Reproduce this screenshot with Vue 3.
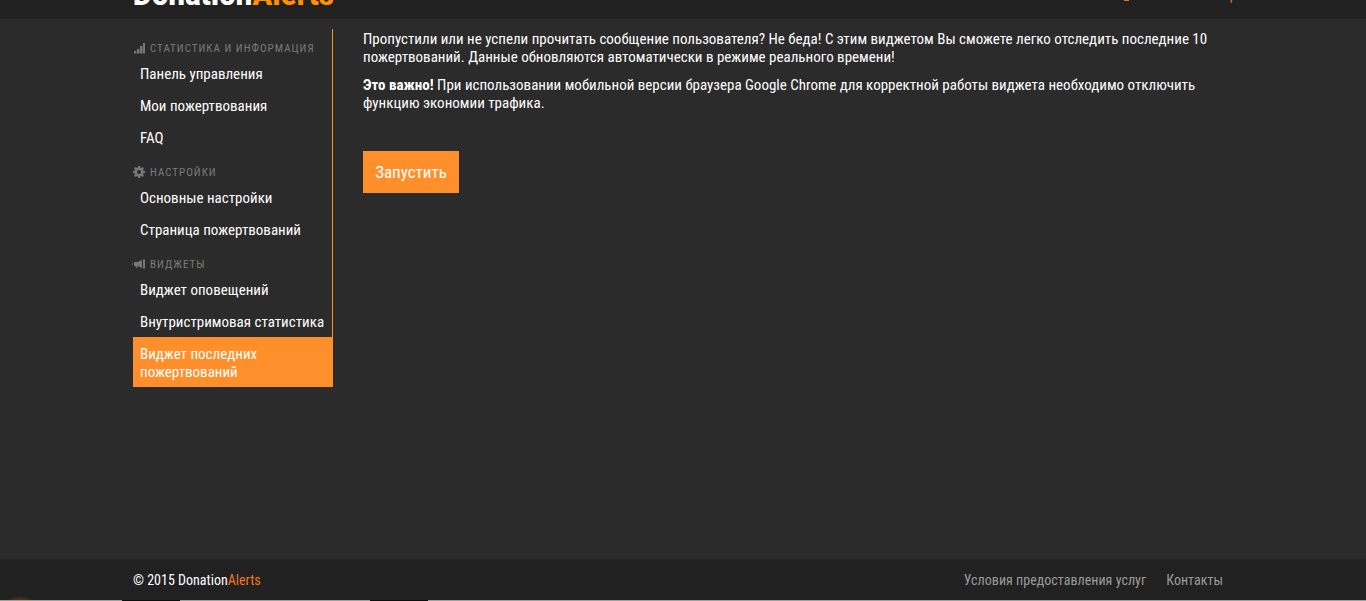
<script setup>
const groups = [
  { title: 'Статистика и информация', icon: 'bars', items: ['Панель управления', 'Мои пожертвования', 'FAQ'] },
  { title: 'Настройки', icon: 'cog', items: ['Основные настройки', 'Страница пожертвований'] },
  { title: 'Виджеты', icon: 'horn', items: ['Виджет оповещений', 'Внутристримовая статистика', 'Виджет последних пожертвований'] }
]
const activeItem = 'Виджет последних пожертвований'
const edgeParts = [
  { w: 122, dark: false },
  { w: 58, dark: true },
  { w: 190, dark: false },
  { w: 58, dark: true },
  { w: 938, dark: false }
]
</script>

<template>
  <div class="page">
    <header class="top">
      <div class="wrap top-row">
        <div class="logo">Donation<span>Alerts</span></div>
        <div class="user"><i class="user-ico"></i><span class="logout">Выход</span></div>
      </div>
    </header>
    <main class="wrap body">
      <nav class="side">
        <section v-for="g in groups" :key="g.title" class="group">
          <h4 class="head">
            <svg v-if="g.icon === 'bars'" class="ico" viewBox="0 0 12 12"><path d="M1 9h2.500v2.500H1zM4 7h2.500v4.500H4zM7 4h2.500v7.500H7zM10 1h2v10.500h-2z"/></svg>
            <svg v-else-if="g.icon === 'cog'" class="ico" viewBox="0 0 12 12"><path fill-rule="evenodd" d="M5 0h2l.3 1.600 1 .4L9.700 1 11 2.300l-1 1.400.4 1L12 5v2l-1.600.3-.4 1 1 1.400L9.700 11l-1.400-1-1 .4L7 12H5l-.3-1.600-1-.4-1.400 1L1 9.700l1-1.400-.4-1L0 7V5l1.600-.3.4-1-1-1.400L2.300 1l1.400 1 1-.4zM6 4a2 2 0 1 0 0 4 2 2 0 0 0 0-4z"/></svg>
            <svg v-else class="ico" viewBox="0 0 12 12"><path d="M-1 5.500h1v1h-1zM1 4h3.500L9 2v8L4.500 8H4l.4 2H3l-.4-2H1zM10 1.500h2v9h-2z"/></svg>
            <span>{{ g.title }}</span>
          </h4>
          <a v-for="it in g.items" :key="it" class="link" :class="{ active: it === activeItem }">{{ it }}</a>
        </section>
      </nav>
      <article class="content">
        <p>Пропустили или не успели прочитать сообщение пользователя? Не беда! С этим виджетом Вы сможете легко отследить последние 10 пожертвований. Данные обновляются автоматически в режиме реального времени!</p>
        <p><b>Это важно!</b> При использовании мобильной версии браузера Google Chrome для корректной работы виджета необходимо отключить функцию экономии трафика.</p>
        <button class="run">Запустить</button>
      </article>
    </main>
    <footer class="foot">
      <div class="wrap foot-row">
        <div class="copy">© 2015 Donation<span>Alerts</span></div>
        <div class="foot-links"><a>Условия предоставления услуг</a><a>Контакты</a></div>
      </div>
      <div class="glow"></div>
    </footer>
    <div class="edge">
      <i v-for="(p, n) in edgeParts" :key="n" :class="{ dark: p.dark }" :style="{ width: p.w + 'px' }"></i>
    </div>
  </div>
</template>

<style>
html, body { margin: 0; background: #2b2b2b; }
</style>

<style scoped>
.page {
  height: 601px;
  display: flex;
  flex-direction: column;
  background: #2b2b2b;
  color: #fff;
  font-family: Roboto, "Liberation Sans", sans-serif;
  font-stretch: 75%;
  overflow: hidden;
}
.wrap { width: 1100px; margin-left: 133px; }
.top {
  height: 18px;
  flex: none;
  background: #212121;
  border-bottom: 1px solid #262626;
  overflow: hidden;
}
.top-row { display: flex; justify-content: space-between; align-items: flex-start; height: 18px; overflow: hidden; }
.logo {
  font: 900 29px/29px Roboto, "Liberation Sans", sans-serif;
  letter-spacing: 0.25px;
  margin-top: -19px;
}
.logo span { color: #ff9000; }
.user { display: flex; align-items: flex-start; }
.user-ico { display: block; width: 5px; height: 1px; background: #f26f1f; margin-right: 69px; }
.logout { color: #f26f1f; font-size: 15px; line-height: 16px; margin-top: -13px; margin-right: -5px; }
.body { flex: 1; display: flex; gap: 30px; padding-top: 10px; min-height: 0; }
.side {
  width: 200px;
  box-sizing: border-box;
  padding-top: 1px;
  align-self: flex-start;
  border-right: 1px solid #ff8f2b;
  flex: none;
}
.group { display: flex; flex-direction: column; }
.head {
  margin: 0;
  height: 20px;
  padding-top: 8px;
  display: flex;
  align-items: center;
  gap: 5px;
  color: #7a7a7a;
  font-size: 11px;
  font-weight: 400;
  letter-spacing: 1.02px;
  text-transform: uppercase;
}
.ico { width: 12px; height: 12px; fill: #777; flex: none; overflow: visible; }
.link {
  display: block;
  box-sizing: border-box;
  padding: 7px 7px;
  min-height: 32px;
  font-size: 15px;
  line-height: 18px;
  color: #fff;
}
.link.active { background: #ff8f2b; width: 200px; margin-top: -1px; padding: 8px 7px 6px; }
.content { width: 860px; padding-top: 1px; font-size: 15px; line-height: 18px; }
.content p { margin: 0 0 10px; }
.run {
  display: block;
  margin-top: 39px;
  width: 96px;
  height: 42px;
  border: 0;
  background: #ff8f2b;
  color: #fff;
  font: inherit;
  font-size: 17px;
  font-stretch: 75%;
  padding: 0;
}
.foot { flex: none; height: 40px; background: #212121; border-top: 1px solid #262626; position: relative; overflow: hidden; }
.foot-row { display: flex; justify-content: space-between; align-items: center; height: 40px; font-size: 14px; }
.copy span { color: #f2771f; }
.foot-links { display: flex; gap: 20px; color: #9a9a9a; margin-right: 10px; letter-spacing: 0.03px; }
.glow {
  position: absolute;
  left: 5px;
  bottom: -8px;
  width: 30px;
  height: 12px;
  background: radial-gradient(closest-side, rgba(255, 110, 40, 0.35), rgba(255, 110, 40, 0));
}
.edge { height: 1px; flex: none; display: flex; }
.edge i { display: block; height: 1px; background: #a0a0a0; }
.edge i.dark { background: #0c0c0c; }
</style>
